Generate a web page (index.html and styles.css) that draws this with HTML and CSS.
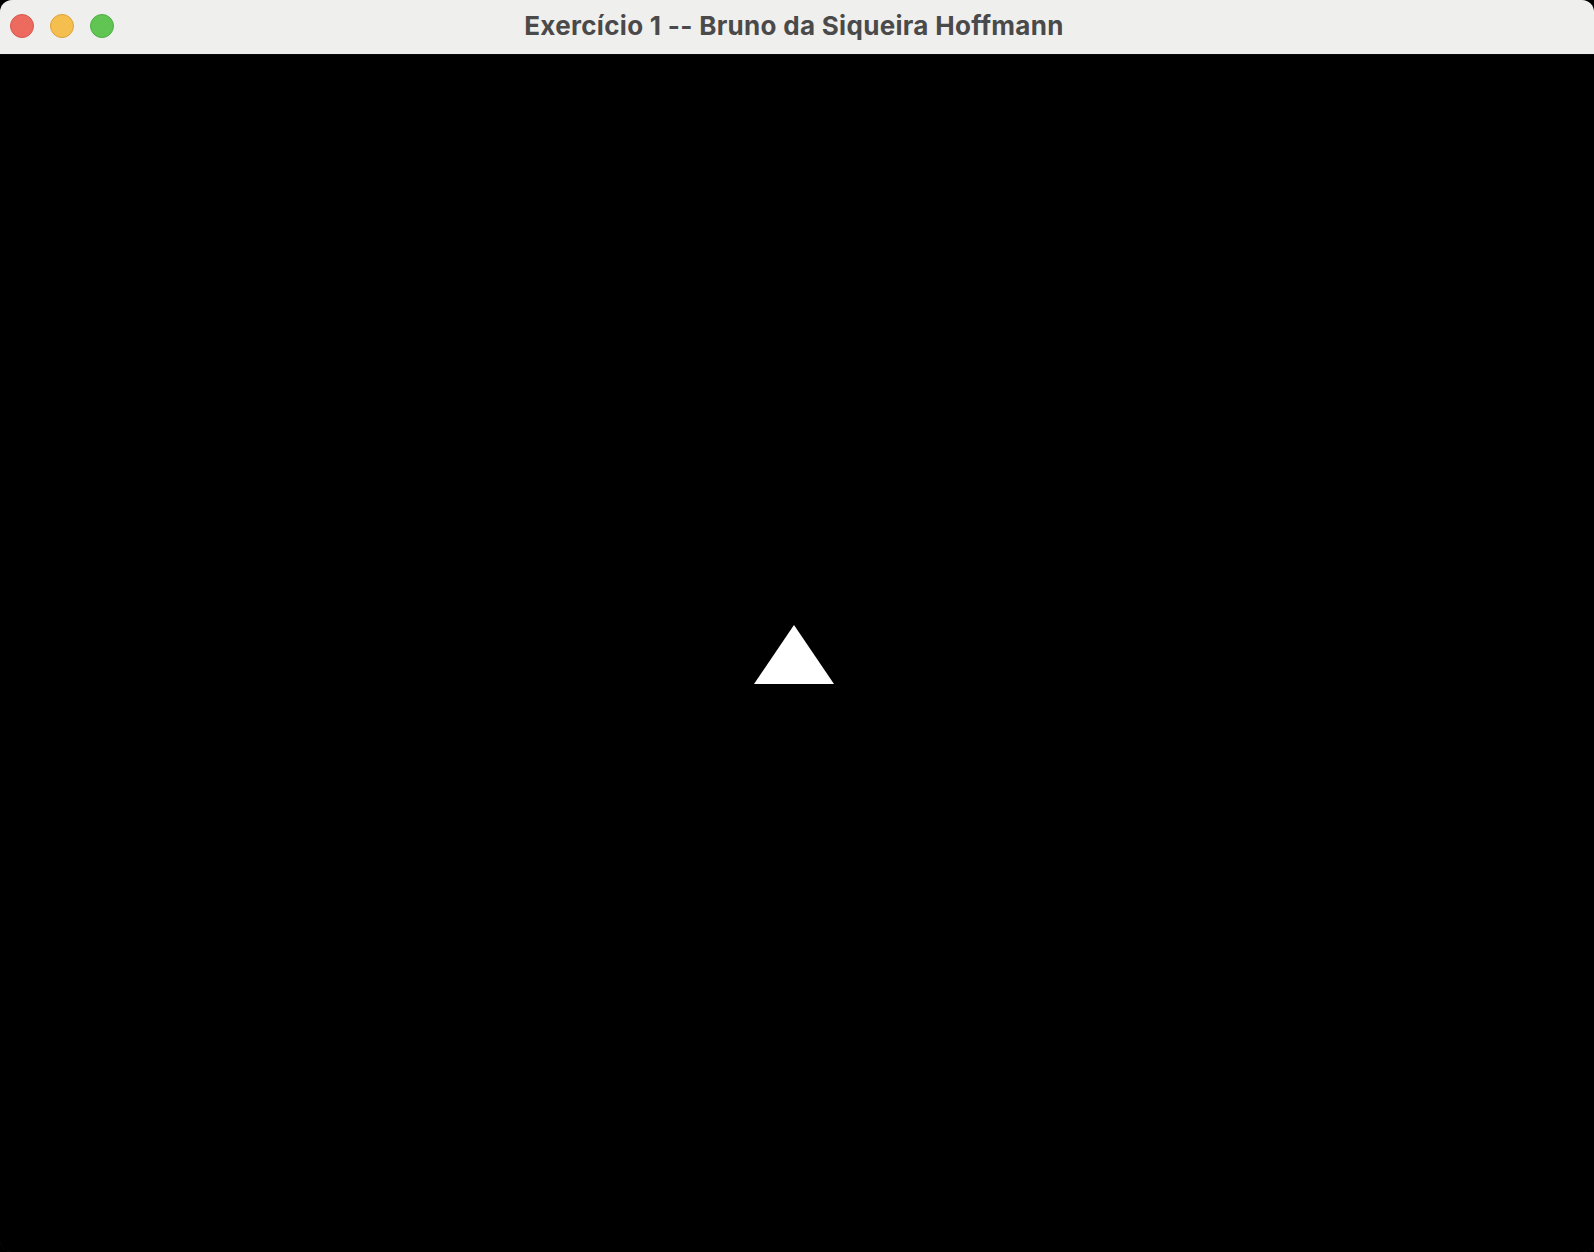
FILE: index.html
```html
<!DOCTYPE html>
<html lang="pt">
<head>
<meta charset="utf-8">
<title>Exercício 1 -- Bruno da Siqueira Hoffmann</title>
<link rel="stylesheet" href="styles.css">
</head>
<body>
<div class="window">
  <div class="titlebar">
    <div class="lights">
      <span class="light red"></span>
      <span class="light yellow"></span>
      <span class="light green"></span>
    </div>
    <div class="title">Exercício 1 -- Bruno da Siqueira Hoffmann</div>
  </div>
  <div class="canvas">
    <svg class="scene" viewBox="0 0 1594 1197" preserveAspectRatio="none" xmlns="http://www.w3.org/2000/svg">
      <polygon points="794,570 754,629 834,629" fill="#ffffff"/>
    </svg>
  </div>
</div>
</body>
</html>
```
FILE: styles.css
```css
html, body {
  margin: 0;
  padding: 0;
  background: #000;
  width: 1594px;
  height: 1252px;
  overflow: hidden;
}
.window {
  width: 1594px;
  height: 1252px;
  box-sizing: border-box;
  border-radius: 12px;
  overflow: hidden;
  display: flex;
  flex-direction: column;
  background: #000;
  box-shadow: inset 0 0 0 1px rgba(255,255,255,0.12);
}
.titlebar {
  height: 55px;
  flex: 0 0 55px;
  box-sizing: border-box;
  background: #efefed;
  position: relative;
  display: flex;
  align-items: center;
  justify-content: center;
  border-bottom: 1px solid #0a0a0a;
}
.lights {
  position: absolute;
  left: 10px;
  top: 14px;
  display: flex;
  gap: 16px;
}
.light {
  width: 24px;
  height: 24px;
  border-radius: 50%;
  box-sizing: border-box;
}
.red { background: #ed6a5e; border: 1px solid #d8564b; }
.yellow { background: #f5bf4f; border: 1px solid #dea236; }
.green { background: #61c554; border: 1px solid #4fae43; }
.title {
  font-family: Inter, "Noto Sans", sans-serif;
  font-weight: 700;
  font-size: 26px;
  color: #4a4a4a;
  letter-spacing: 0.3px;
  margin-top: -3px;
  margin-left: -6px;
}
.canvas {
  flex: 1;
  position: relative;
  background: #000;
}
.scene {
  display: block;
  width: 100%;
  height: 100%;
}
```
